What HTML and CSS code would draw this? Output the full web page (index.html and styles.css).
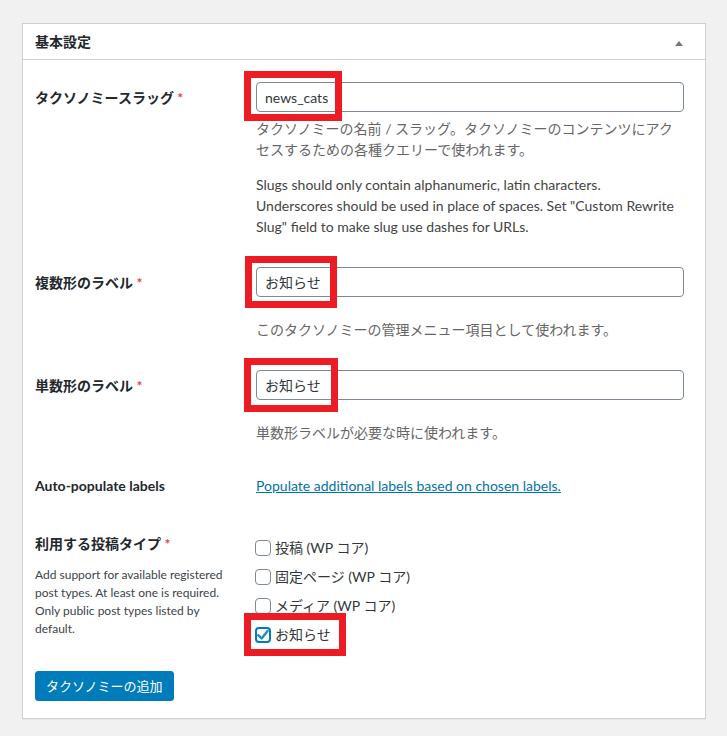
FILE: index.html
```html
<!DOCTYPE html>
<html lang="ja">
<head>
<meta charset="utf-8">
<title>基本設定</title>
<link rel="stylesheet" href="styles.css">
</head>
<body>
<div class="wrap">
  <div class="postbox">
    <div class="postbox-header">
      <h2 class="hndle">基本設定</h2>
      <span class="toggle-indicator"></span>
    </div>
    <div class="inside">
      <div class="row row-slug">
        <div class="th"><label class="lbl">タクソノミースラッグ <span class="required">*</span></label></div>
        <div class="td">
          <div class="field">
            <input class="text" type="text" value="news_cats">
            <span class="mark mark-1"></span>
          </div>
          <p class="desc desc-first">タクソノミーの名前 / スラッグ。タクソノミーのコンテンツにアク<br>セスするための各種クエリーで使われます。</p>
          <p class="slug-details">Slugs should only contain alphanumeric, latin characters.<br>Underscores should be used in place of spaces. Set "Custom Rewrite<br>Slug" field to make slug use dashes for URLs.</p>
        </div>
      </div>

      <div class="row row-label">
        <div class="th"><label class="lbl">複数形のラベル <span class="required">*</span></label></div>
        <div class="td">
          <div class="field">
            <input class="text" type="text" value="お知らせ">
            <span class="mark mark-2"></span>
          </div>
          <p class="desc desc-below">このタクソノミーの管理メニュー項目として使われます。</p>
        </div>
      </div>

      <div class="row row-label">
        <div class="th"><label class="lbl">単数形のラベル <span class="required">*</span></label></div>
        <div class="td">
          <div class="field">
            <input class="text" type="text" value="お知らせ">
            <span class="mark mark-3"></span>
          </div>
          <p class="desc desc-below">単数形ラベルが必要な時に使われます。</p>
        </div>
      </div>

      <div class="row row-auto">
        <div class="th"><span class="lbl lbl-flat">Auto-populate labels</span></div>
        <div class="td"><a class="link" href="#">Populate additional labels based on chosen labels.</a></div>
      </div>

      <div class="row row-types">
        <div class="th">
          <span class="lbl lbl-flat">利用する投稿タイプ <span class="required">*</span></span>
          <p class="small-desc">Add support for available registered<br>post types. At least one is required.<br>Only public post types listed by<br>default.</p>
        </div>
        <div class="td">
          <div class="check"><span class="cb"></span><span class="check-text">投稿 (WP コア)</span></div>
          <div class="check"><span class="cb"></span><span class="check-text">固定ページ (WP コア)</span></div>
          <div class="check"><span class="cb"></span><span class="check-text">メディア (WP コア)</span></div>
          <div class="check">
            <span class="cb cb-checked"><svg viewBox="0 0 16 16" width="16" height="16" aria-hidden="true"><path d="M3.2 8.2 L6.6 11.4 L12.6 3.9" fill="none" stroke="#1e8cbe" stroke-width="2.4" stroke-linecap="round" stroke-linejoin="round"/></svg></span><span class="check-text">お知らせ</span>
            <span class="mark mark-4"></span>
          </div>
        </div>
      </div>

      <div class="submit">
        <span class="button-primary">タクソノミーの追加</span>
      </div>
    </div>
  </div>
</div>
</body>
</html>
```

FILE: styles.css
```css
* { box-sizing: border-box; }

html, body {
  margin: 0;
  padding: 0;
}

body {
  background: #f1f1f1;
  font-family: Lato, "Noto Sans CJK JP", sans-serif;
  font-size: 14px;
  line-height: 21px;
  color: #444;
}

.wrap {
  padding: 23px 21px 17px 22px;
}

.postbox {
  width: 684px;
  background: #fff;
  border: 1px solid #ccd0d4;
  box-shadow: 0 1px 1px rgba(0, 0, 0, 0.04);
}

.postbox-header {
  height: 36px;
  border-bottom: 1px solid #ccd0d4;
  display: flex;
  align-items: center;
  justify-content: space-between;
  padding: 0 22px 0 12px;
}

.hndle {
  margin: 0;
  font-size: 14px;
  font-weight: 700;
  line-height: 21px;
  color: #23282d;
}

.toggle-indicator {
  width: 0;
  height: 0;
  border-left: 4px solid transparent;
  border-right: 4px solid transparent;
  border-bottom: 5px solid #72777c;
  margin-top: 3px;
}

.inside {
  padding: 22px 21px 17px 12px;
}

.row {
  display: grid;
  grid-template-columns: 221px 1fr;
}

.row-label { margin-top: 30px; }
.row-auto { margin-top: 32px; }
.row-types { margin-top: 37px; }

.lbl {
  display: block;
  padding-top: 5px;
  font-weight: 700;
  color: #23282d;
}

.lbl-flat { padding-top: 0; }

.required {
  color: #e04545;
  font-weight: 700;
}

.field {
  position: relative;
}

.text {
  display: block;
  width: 100%;
  height: 30px;
  margin: 0;
  padding: 0 8px;
  border: 1px solid #7e8993;
  border-radius: 4px;
  background: #fff;
  font-family: Lato, "Noto Sans CJK JP", sans-serif;
  font-size: 14px;
  color: #32373c;
  outline: none;
}

.desc {
  margin: 0;
  color: #666;
}

.desc-first { margin-top: 6px; }
.desc-below { margin-top: 22px; }

.slug-details {
  margin: 14px 0 0;
  color: #444;
}

.link {
  color: #0073aa;
  text-decoration: underline;
}

.small-desc {
  margin: 12px 0 0;
  font-size: 12px;
  line-height: 18px;
  color: #3c434a;
}

.check {
  position: relative;
  display: flex;
  align-items: center;
  height: 29px;
  color: #32373c;
}

.cb {
  width: 16px;
  height: 16px;
  margin-left: -1px;
  margin-right: 4px;
  border: 1px solid #7e8993;
  border-radius: 4px;
  background: #fff;
  flex: none;
  display: flex;
  align-items: center;
  justify-content: center;
}

.cb-checked {
  border: 2px solid #007cba;
}

.cb-checked svg {
  flex: none;
}

.submit {
  margin-top: 22px;
}

.button-primary {
  display: inline-block;
  height: 30px;
  padding: 0 10px;
  border: 1px solid #007cba;
  border-radius: 3px;
  background: #007cba;
  color: #fff;
  font-size: 13px;
  line-height: 28px;
}

.mark {
  position: absolute;
  border: 7px solid #ed1c24;
  pointer-events: none;
}

.mark-1 { left: -12px; top: -11px; width: 98px; height: 50px; }
.mark-2 { left: -11px; top: -11px; width: 92px; height: 52px; }
.mark-3 { left: -12px; top: -12px; width: 94px; height: 54px; }
.mark-4 { left: -12px; top: -7px; width: 102px; height: 43px; }
```
